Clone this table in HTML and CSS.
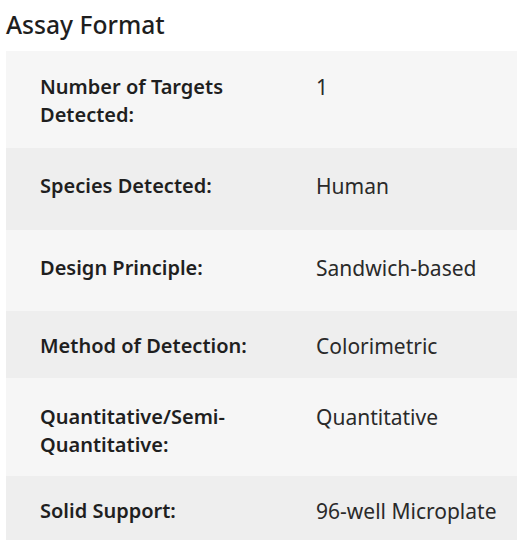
FILE: index.html
```html
<!DOCTYPE html>
<html>
<head>
<meta charset="utf-8">
<link rel="stylesheet" href="styles.css">
</head>
<body>
<section class="spec">
  <h2 class="spec-title">Assay Format</h2>
  <div class="spec-table">
    <div class="spec-row">
      <div class="spec-label">Number of Targets Detected:</div>
      <div class="spec-value">1</div>
    </div>
    <div class="spec-row">
      <div class="spec-label">Species Detected:</div>
      <div class="spec-value">Human</div>
    </div>
    <div class="spec-row">
      <div class="spec-label">Design Principle:</div>
      <div class="spec-value">Sandwich-based</div>
    </div>
    <div class="spec-row">
      <div class="spec-label">Method of Detection:</div>
      <div class="spec-value">Colorimetric</div>
    </div>
    <div class="spec-row">
      <div class="spec-label">Quantitative/Semi-Quantitative:</div>
      <div class="spec-value">Quantitative</div>
    </div>
    <div class="spec-row">
      <div class="spec-label">Solid Support:</div>
      <div class="spec-value">96-well Microplate</div>
    </div>
  </div>
</section>
</body>
</html>
```
FILE: styles.css
```css
html, body {
  margin: 0;
  padding: 0;
  background: #ffffff;
}
body {
  font-family: "Noto Sans", "Open Sans", sans-serif;
  color: #222222;
}
.spec {
  padding-left: 6px;
}
.spec-title {
  margin: 0;
  padding-top: 7px;
  height: 51px;
  box-sizing: border-box;
  font-size: 24.6px;
  font-weight: 500;
  line-height: 36px;
  color: #1e1e1e;
}
.spec-table {
  display: flex;
  flex-direction: column;
}
.spec-row {
  display: grid;
  grid-template-columns: 276px 1fr;
  align-items: start;
  padding-left: 34px;
  font-size: 20px;
  line-height: 28px;
  background: #f6f6f6;
  box-sizing: border-box;
}
.spec-row:nth-child(even) {
  background: #eeeeee;
}
.spec-row:nth-child(1) { height: 97px; padding-top: 22px; }
.spec-row:nth-child(2) { height: 82px; padding-top: 24px; }
.spec-row:nth-child(3) { height: 81px; padding-top: 24px; }
.spec-row:nth-child(4) { height: 67px; padding-top: 21px; }
.spec-row:nth-child(5) { height: 98px; padding-top: 25px; }
.spec-row:nth-child(6) { height: 70px; padding-top: 21px; }
.spec-label {
  font-weight: 600;
  color: #1f1f1f;
  padding-right: 20px;
}
.spec-value {
  font-size: 21px;
  font-weight: 400;
  color: #2a2a2a;
}
```
